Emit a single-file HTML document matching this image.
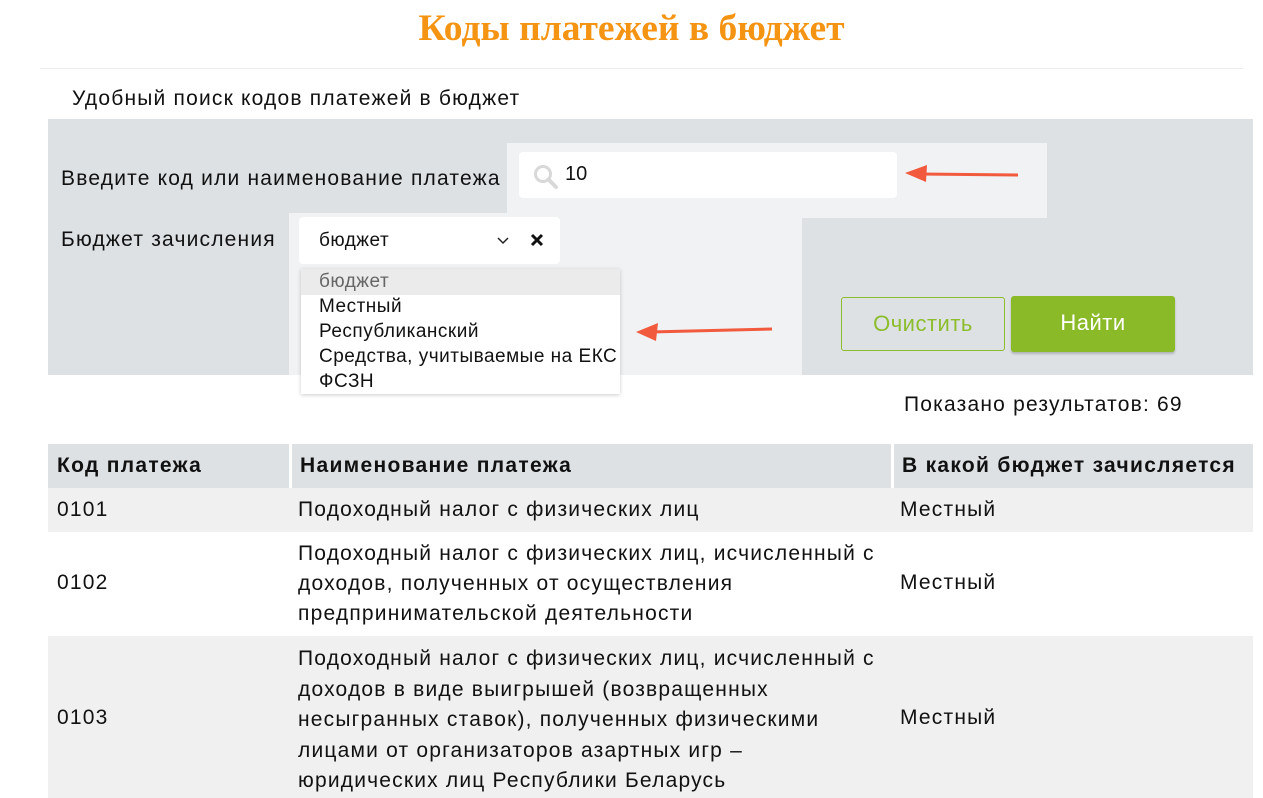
<!DOCTYPE html>
<html><head><meta charset="utf-8"><style>
*{box-sizing:border-box;margin:0;padding:0}
body{width:1263px;height:798px;overflow:hidden;background:#fff;font-family:"Liberation Sans",Arial,sans-serif;color:#111;position:relative}
.a{position:absolute}
h1{position:absolute;left:0;width:1263px;top:7px;text-align:center;font-family:"Liberation Serif",serif;font-weight:bold;font-size:37.5px;color:#f59312}
.t{font-size:21px;letter-spacing:1.2px;white-space:nowrap}
</style></head><body>
<h1>Коды платежей в бюджет</h1>
<div class="a" style="left:40px;top:68px;width:1203px;height:1px;background:#ececec"></div>
<div class="a t" style="left:72px;top:87px">Удобный поиск кодов платежей в бюджет</div>
<div class="a" style="left:48px;top:119px;width:1205px;height:256px;background:#dde1e4"></div>
<div class="a" style="left:507px;top:143px;width:540px;height:75px;background:#f0f2f3"></div>
<div class="a" style="left:289px;top:213px;width:513px;height:162px;background:#f0f2f3"></div>
<div class="a t" style="left:61px;top:167px">Введите код или наименование платежа</div>
<div class="a t" style="left:61px;top:228px">Бюджет зачисления</div>
<div class="a" style="left:519px;top:152px;width:378px;height:46px;background:#fff;border-radius:4px"></div>
<svg class="a" style="left:532px;top:163px" width="28" height="28" viewBox="0 0 28 28"><circle cx="11" cy="11" r="7.5" fill="none" stroke="#d8d8d8" stroke-width="3"/><path d="M16.5 16.5L24 24" stroke="#d8d8d8" stroke-width="4" stroke-linecap="round"/></svg>
<div class="a t" style="left:565px;top:163px;font-size:20px;letter-spacing:0">10</div>
<div class="a" style="left:299px;top:217px;width:261px;height:47px;background:#fff;border-radius:4px"></div>
<div class="a" style="left:319px;top:230px;font-size:19px;letter-spacing:.5px">бюджет</div>
<svg class="a" style="left:495px;top:235px" width="16" height="12" viewBox="0 0 16 12"><path d="M3 3l5 5 5-5" fill="none" stroke="#222" stroke-width="1.5"/></svg>
<svg class="a" style="left:529px;top:232px" width="16" height="16" viewBox="0 0 16 16"><path d="M3 3l10 10M13 3L3 13" stroke="#111" stroke-width="3"/></svg>
<div class="a" style="left:301px;top:269px;width:319px;height:125px;background:#fff;box-shadow:0 1px 4px rgba(0,0,0,.2)"></div>
<div class="a" style="left:301px;top:269px;width:319px;height:26px;background:#ebebeb"></div>
<div class="a" style="left:319px;top:269px;font-size:19px;letter-spacing:.5px;line-height:25px;color:#111;white-space:nowrap">
<div style="color:#666">бюджет</div><div>Местный</div><div>Республиканский</div><div>Средства, учитываемые на ЕКС</div><div>ФСЗН</div></div>
<svg class="a" style="left:636px;top:318px" width="140" height="28" viewBox="0 0 140 28"><path d="M14 14L136 11" stroke="#f25a3d" stroke-width="3"/><path d="M0 14L22 5L20 23Z" fill="#f25a3d"/></svg>
<svg class="a" style="left:905px;top:162px" width="115" height="24" viewBox="0 0 115 24"><path d="M14 12L113 13" stroke="#f25a3d" stroke-width="3"/><path d="M0 11L22 3L21 20Z" fill="#f25a3d"/></svg>
<div class="a" style="left:841px;top:297px;width:164px;height:54px;border:1px solid #8cbd2c;border-radius:3px;color:#8cbd2c;font-size:22px;letter-spacing:.5px;text-align:center;line-height:52px">Очистить</div>
<div class="a" style="left:1011px;top:296px;width:164px;height:56px;background:#8aba28;border-radius:3px;color:#fff;font-size:22px;letter-spacing:.5px;text-align:center;line-height:54px;box-shadow:0 2px 2px rgba(0,0,0,.2)">Найти</div>
<div class="a t" style="left:904px;top:393px">Показано результатов: 69</div>
<div class="a" style="left:48px;top:444px;width:1205px;height:44px;background:#dde1e4"></div>
<div class="a" style="left:289px;top:444px;width:3px;height:44px;background:#fff"></div>
<div class="a" style="left:891px;top:444px;width:3px;height:44px;background:#fff"></div>
<div class="a t" style="left:57px;top:454px;font-weight:bold;letter-spacing:1.3px">Код платежа</div>
<div class="a t" style="left:300px;top:454px;font-weight:bold;letter-spacing:1.3px">Наименование платежа</div>
<div class="a t" style="left:902px;top:454px;font-weight:bold;letter-spacing:1.3px">В какой бюджет зачисляется</div>
<div class="a" style="left:48px;top:488px;width:1205px;height:44px;background:#f0f0f0"></div>
<div class="a" style="left:48px;top:636px;width:1205px;height:162px;background:#f0f0f0"></div>
<div class="a t" style="left:57px;top:498px">0101</div>
<div class="a t" style="left:298px;top:498px">Подоходный налог с физических лиц</div>
<div class="a t" style="left:900px;top:498px">Местный</div>
<div class="a t" style="left:57px;top:571px">0102</div>
<div class="a t" style="left:298px;top:539px;line-height:30px">Подоходный налог с физических лиц, исчисленный с<br>доходов, полученных от осуществления<br>предпринимательской деятельности</div>
<div class="a t" style="left:900px;top:571px">Местный</div>
<div class="a t" style="left:57px;top:706px">0103</div>
<div class="a t" style="left:298px;top:644px;line-height:30.5px">Подоходный налог с физических лиц, исчисленный с<br>доходов в виде выигрышей (возвращенных<br>несыгранных ставок), полученных физическими<br>лицами от организаторов азартных игр –<br>юридических лиц Республики Беларусь</div>
<div class="a t" style="left:900px;top:706px">Местный</div>
</body></html>
